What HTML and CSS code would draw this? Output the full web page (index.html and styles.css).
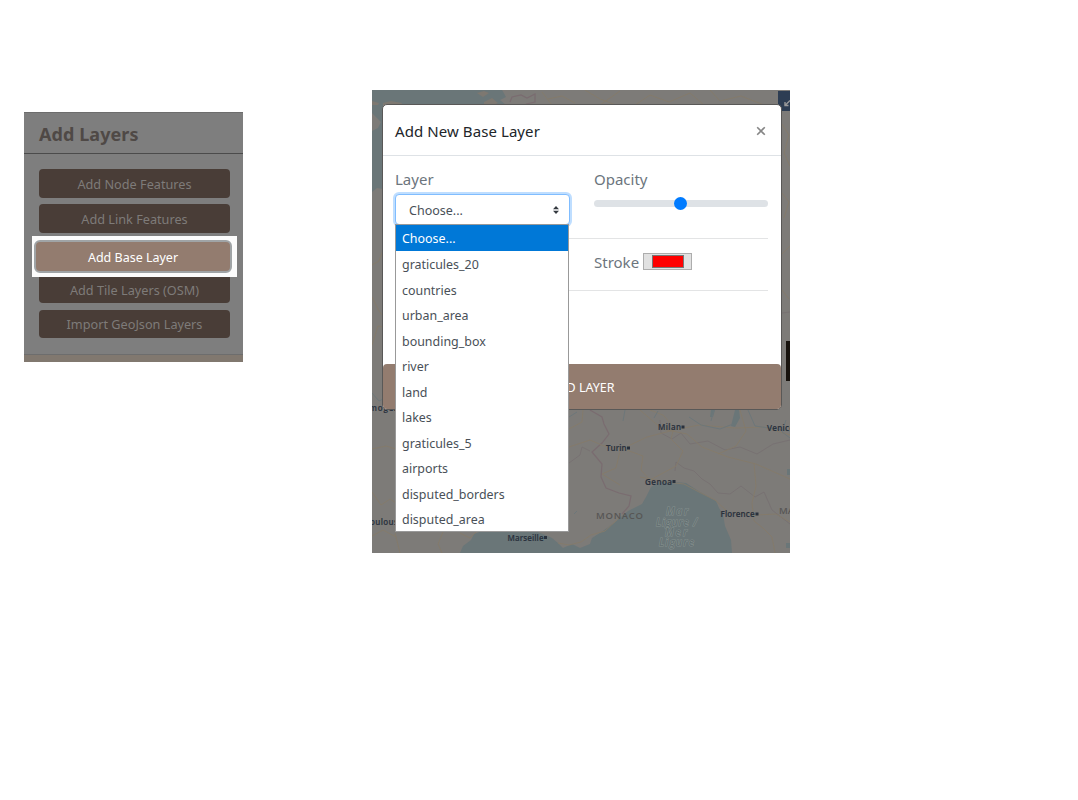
FILE: index.html
```html
<!DOCTYPE html>
<html lang="en">
<head>
<meta charset="utf-8">
<title>Add Base Layer</title>
<link rel="stylesheet" href="styles.css">
</head>
<body>
<main class="page">
  <aside class="sidebar">
    <h2 class="sidebar-title">Add Layers</h2>
    <div class="buttons">
      <button class="btn">Add Node Features</button>
      <button class="btn">Add Link Features</button>
      <div class="spotlight"><button class="btn btn-active">Add Base Layer</button></div>
      <button class="btn btn-tile">Add Tile Layers (OSM)</button>
      <button class="btn btn-import">Import GeoJson Layers</button>
    </div>
    <div class="sidebar-foot"></div>
  </aside>

  <section class="stage">
    <svg class="map" viewBox="372 90 418 463" width="418" height="463">
      <rect x="372" y="90" width="418" height="463" fill="#7d7b78"/>
      <g fill="#6a7678">
        <path d="M372 90H502L506 97L500 100L506 105H383V189L377 188L372 192V131L378 128L381 122L372 113Z"/>
        <path d="M460 553L463 546L471 540L474 534L482 531L500 532L535 531L543 534L552 538L558 543L563 548L572 544L580 548L590 544L592 538L603 531L614 523L628 511L642 504L646 497L651 487L657 483L665 481L686 483L700 492L716 501L719 508L723 514L725 526L731 540L732 553Z"/>
        <path d="M735 410L739 410L740 418L735 427L731 426ZM711 410L715 410L713 417L710 417ZM787 469H790V475H787ZM786 543H790V548H786Z"/>
      </g>
      <path d="M477 93L484 91L489 93L483 97ZM484 102L492 98L498 103L493 105H484ZM383 103L391 101L402 103L401 105H383ZM372 101L379 103L378 105H372Z" fill="#7d7871"/>
      <g fill="none" stroke="#7a6c70" stroke-width="1.200">
        <path d="M590 410L602 417L604 424L609 434L602 443L592 452L602 464L601 477L606 488L619 493L631 496L629 506L622 514M510 102L512 97L521 95L527 98L535 94L535 102L526 104"/>
      </g>
      <path d="M569 463L580 455L582 447L590 451M675 471L676 462L684 468L694 471L702 479L710 484L718 493L730 494L741 486L755 497L764 492L772 510L790 524M660 420L661 433L672 439L681 433L690 444L708 441L725 450L740 447L757 454L773 444L790 440M782 313L790 312" fill="none" stroke="#777072" stroke-width=".9"/>
      <g fill="none" stroke="#857a6a" stroke-width=".9">
        <path d="M569 447L590 440L604 446L624 449L643 456L641 470L650 480L663 473L676 466L683 451L671 439L674 427L663 415L650 410M624 448L647 437L674 430L699 425L735 428L763 427L790 435M640 410L662 429L687 434L702 447L728 457L756 464L790 479M718 454L736 446L746 431L740 410M754 463L756 486L752 503L754 521L763 528L772 537L775 553M733 512L756 515L776 514L790 522M569 429L582 422L583 410M620 451L616 468L602 474L620 485M640 477L666 482L684 484L699 492L715 500L728 512M558 543L569 545L581 542L591 535L605 531L620 517"/>
        <path d="M372 449L386 446L396 449M372 536L383 530L396 537M372 492L381 505L390 499L396 503M395 533L400 553M443 532L438 544L442 553M460 533L470 538L477 531M372 345L378 326L383 327M372 297L379 311L383 316M372 265L379 261L383 250"/>
        <path d="M542 92L552 105M548 99L562 96L575 103M585 90L600 99L616 105M600 105L620 91M635 105L650 95L669 102L690 93L704 105M710 90L720 101L741 96L764 105M782 124L789 135L784 153L790 166M782 193L789 202L784 218M782 254L790 246M782 290L789 299"/>
      </g>
      <path d="M569 417L577 412M623 421L625 410M689 417L701 425L720 429L733 424M748 410L755 426L790 431M574 514L577 511M372 393L379 401L383 399M786 420L782 432L790 438M658 411L654 418M714 410L711 421" fill="none" stroke="#6d777a" stroke-width="1"/>
      <g class="city">
        <text x="658" y="430" textLength="23">Milan</text><text x="606" y="451" textLength="20.500">Turin</text>
        <text x="645" y="485" textLength="27">Genoa</text><text x="720.500" y="517" textLength="34">Florence</text>
        <text x="767" y="431" textLength="27">Venice</text><text x="507.500" y="541" textLength="36">Marseille</text>
        <text x="361" y="411" textLength="37">Limoges</text><text x="365" y="525" textLength="38">Toulouse</text>
      </g>
      <path d="M681.500 425.500h3v3h-3zM627 446.500h3v3h-3zM672.500 480h3v3h-3zM755.500 512.500h3v3h-3zM544 536h3v3h-3z" fill="#29313d"/>
      <g class="country"><text x="596" y="519" textLength="47">MONACO</text><text x="779" y="514">MARINO</text></g>
      <g class="sea-name"><text x="666" y="515" textLength="22">Mar</text><text x="656" y="525.500" textLength="41">Ligure /</text><text x="665" y="536" textLength="22">Mer</text><text x="659" y="546" textLength="35">Ligure</text></g>
      <rect x="778" y="91" width="12" height="20" fill="#2d3d53"/>
      <path d="M785 105.500L790 100.500M785 102V105.500H788.500" fill="none" stroke="#99999a" stroke-width="1.400"/>
      <rect x="786" y="341" width="4" height="40" fill="#17120d"/>
    </svg>

    <div class="modal">
      <header class="modal-head">
        <h5 class="modal-title">Add New Base Layer</h5>
        <svg class="close" viewBox="0 0 10 10" width="10" height="10"><path d="M1.200 1.200L8.800 8.800M8.800 1.200L1.200 8.800"/></svg>
      </header>
      <div class="modal-body">
        <div class="row row-first">
          <div class="col">
            <label class="label">Layer</label>
            <div class="select"><span>Choose...</span><svg viewBox="0 0 6 8" width="6" height="8"><path d="M3 0L6 3.200H0ZM0 4.800H6L3 8Z" fill="#343a40"/></svg>
              <ul class="menu">
                <li class="picked">Choose...</li><li>graticules_20</li><li>countries</li><li>urban_area</li><li>bounding_box</li><li>river</li><li>land</li><li>lakes</li><li>graticules_5</li><li>airports</li><li>disputed_borders</li><li>disputed_area</li>
              </ul>
            </div>
          </div>
          <div class="col">
            <label class="label">Opacity</label>
            <div class="slider"><i class="thumb"></i></div>
          </div>
        </div>
        <div class="row row-stroke"><div class="col"></div><div class="col stroke"><span class="label">Stroke</span><span class="swatch"><i></i></span></div></div>
      </div>
      <button class="submit">ADD LAYER</button>
    </div>
  </section>
</main>
</body>
</html>
```
FILE: styles.css
```css
* { box-sizing: border-box; }
body { margin: 0; background: #fff; font-family: "Noto Sans", sans-serif; }
button { font-family: inherit; border: 0; padding: 0; }
.page { height: 800px; display: flex; align-items: flex-start; padding: 90px 0 0 24px; overflow: hidden; }

.sidebar { width: 219px; height: 250px; margin-top: 22px; background: #7e7e7e; border-top: 1px solid #6d6d6d; display: flex; flex-direction: column; }
.sidebar-title { margin: 0; height: 41px; padding-left: 15px; border-bottom: 1px solid #4b4b4b; font-size: 18px; letter-spacing: .07px; line-height: 42px; font-weight: 700; color: #4f4946; }
.buttons { padding: 15px 13px 0 15px; display: flex; flex-direction: column; }
.btn { display: block; width: 100%; height: 29px; margin-bottom: 6px; border-radius: 4px; background: #493d37; color: #7e7b79; font-size: 12.700px; line-height: 30px; text-align: center; }
.spotlight { width: 205px; height: 41px; margin: -3px 0 0 -7px; padding: 4px 5px 4px 2px; background: #fcfcfc; }
.btn-active { width: 198px; height: 33px; margin: 0; border: 2px solid #a0a4a6; border-radius: 6px; background: #937c6f; color: #fff; font-size: 12.500px; line-height: 31px; }
.btn-tile { height: 26px; line-height: 24px; border-radius: 0 0 4px 4px; margin-bottom: 7px; }
.btn-import { height: 28px; line-height: 28px; }
.sidebar-foot { height: 8px; margin-top: auto; background: #81786f; border-top: 1px solid #6d6d6d; }

.stage { width: 418px; height: 463px; margin-left: 129px; display: grid; overflow: hidden; }
.map, .modal { grid-area: 1 / 1; }
.map { display: block; }
.city { font: 600 8px "Open Sans", sans-serif; fill: #29313d; stroke: #29313d; stroke-width: .15px; }
.country { font: 600 9.500px "Open Sans", sans-serif; fill: #575655; }
.sea-name { font: italic 600 10px "Open Sans", sans-serif; fill: #657173; stroke: #86918f; stroke-width: 1px; paint-order: stroke; }

.modal { position: relative; width: 400px; height: 306px; margin: 14px 0 0 10px; background: #fff; border: 1px solid #595857; border-radius: 5px; display: flex; flex-direction: column; }
.modal-head { height: 51px; padding: 0 15px 0 12px; border-bottom: 1px solid #dee2e6; display: flex; align-items: center; justify-content: space-between; }
.modal-title { margin: 2px 0 0; font-size: 15px; letter-spacing: .08px; font-weight: 400; color: #212529; white-space: nowrap; }
.close { margin-top: 1px; fill: none; stroke: #868686; stroke-width: 1.600; }
.modal-body { height: 208px; padding: 0 13px 0 12px; }
.row { display: grid; grid-template-columns: 174px 174px; column-gap: 25px; border-bottom: 1px solid #e3e4e5; }
.row-first { height: 83px; padding-top: 11px; }
.row-stroke { height: 52px; }
.label { display: block; color: #6c757d; font-size: 15px; line-height: 25px; }
.select { position: relative; width: 175px; height: 31px; margin-top: 2px; padding: 1px 10px 0 13px; display: flex; align-items: center; justify-content: space-between; border: 1px solid #80bdff; border-radius: 4px; box-shadow: 0 0 0 2px #bfdeff; background: #fff; color: #495057; font-size: 12.500px; }
.menu { position: absolute; z-index: 2; left: -1px; top: 29px; width: 174px; height: 308px; margin: 0; padding: 0; list-style: none; background: #fff; border: 1px solid #999; font-size: 12.450px; color: #495057; }
.menu li { height: 25.550px; padding-left: 6px; line-height: 28px; }
.menu .picked { height: 26px; background: #0078d7; color: #fff; }
.slider { height: 7px; margin-top: 8px; padding-right: 1.500px; border-radius: 4px; background: #dee2e6; display: flex; align-items: center; justify-content: center; }
.thumb { width: 13px; height: 13px; border-radius: 50%; background: #007bff; }
.stroke { display: flex; align-items: flex-start; padding-top: 11px; gap: 4px; }
.swatch { width: 49px; height: 17px; margin-top: 3px; padding: 1px 7px 1px 8px; border: 1px solid #adadad; background: #e1e1e1; display: flex; }
.swatch i { flex: 1; border: 1px solid #777; background: #f00; }
.submit { height: 45px; border-radius: 4px; background: #937c6f; color: #fff; font-size: 12.500px; line-height: 47px; }
```
